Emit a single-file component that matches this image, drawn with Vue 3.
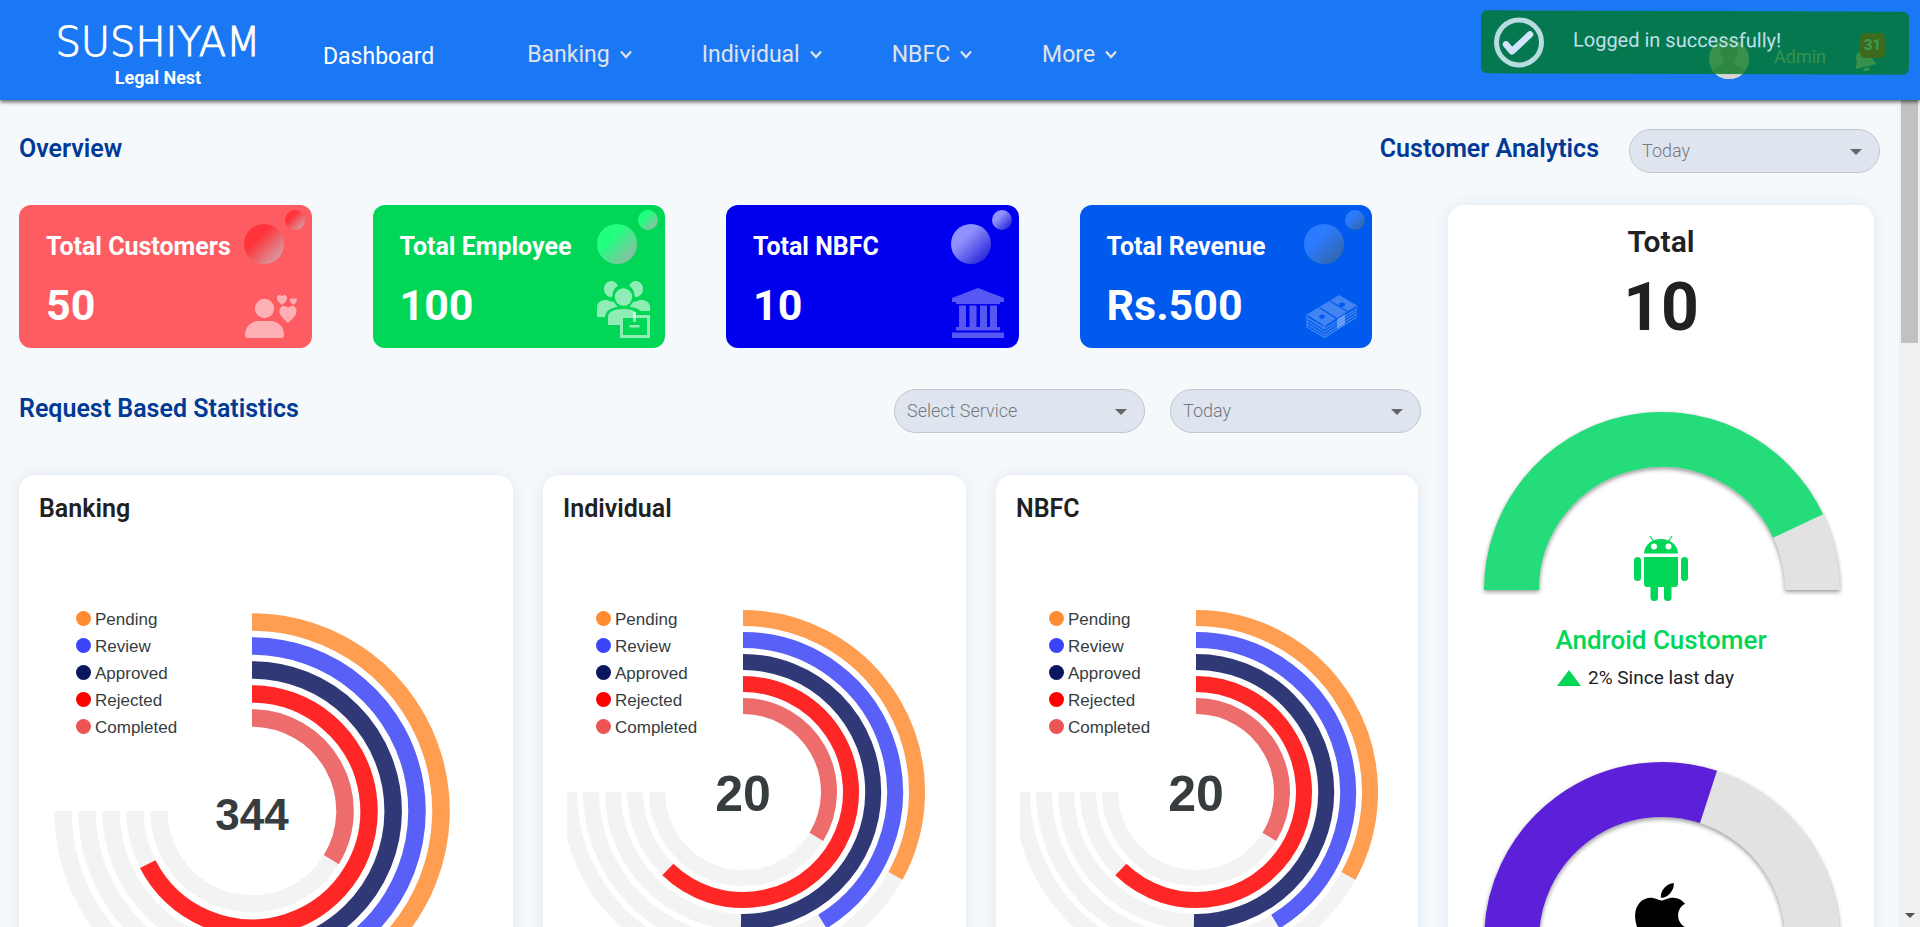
<script setup>
const menus = ['Banking', 'Individual', 'NBFC', 'More']

const stats = [
  { key: 'customers', title: 'Total Customers', value: '50' },
  { key: 'employee', title: 'Total Employee', value: '100' },
  { key: 'nbfc', title: 'Total NBFC', value: '10' },
  { key: 'revenue', title: 'Total Revenue', value: 'Rs.500' },
]

const series = [
  { name: 'Pending', dot: '#ff8c33', bar: '#ff9d50' },
  { name: 'Review', dot: '#3c44f9', bar: '#5860f8' },
  { name: 'Approved', dot: '#0b165e', bar: '#303975' },
  { name: 'Rejected', dot: '#ff0000', bar: '#ff2626' },
  { name: 'Completed', dot: '#ec5353', bar: '#ed6c6c' },
]

const charts = [
  { name: 'Banking', total: 344, size: 'large', width: 494, cx: 233, cy: 288, r: 189, pitch: 24, thick: 17.5, clip: 0, values: [55, 60, 67, 90, 45] },
  { name: 'Individual', total: 20, size: 'small', width: 423, cx: 200, cy: 269, r: 174, pitch: 22, thick: 16, clip: 24, values: [44, 55, 67, 83, 45] },
  { name: 'NBFC', total: 20, size: 'small', width: 422, cx: 200, cy: 269, r: 174, pitch: 22, thick: 16, clip: 24, values: [44, 55, 67, 83, 45] },
]

// Angles are degrees clockwise from twelve o'clock.
function arc(cx, cy, r, from, to) {
  const at = (deg) => {
    const a = ((deg - 90) * Math.PI) / 180
    return `${(cx + r * Math.cos(a)).toFixed(2)} ${(cy + r * Math.sin(a)).toFixed(2)}`
  }
  return `M${at(from)} A${r} ${r} 0 ${to - from > 180 ? 1 : 0} 1 ${at(to)}`
}

const ring = (c, i, percent) => arc(c.cx, c.cy, c.r - i * c.pitch, 0, (270 * percent) / 100)
const gauge = (from, to) => arc(214, 190, 150.5, -90 + 1.8 * from, -90 + 1.8 * to)

const gauges = [
  { key: 'android', title: 'Android Customer', note: '2% Since last day', percent: 86, color: '#25dc7b' },
  { key: 'apple', percent: 60, color: '#5c20d8' },
]
</script>

<template>
  <div class="page">
    <header class="topbar">
      <a class="brand" href="#">
        <span class="brand-name">SUSHIYAM</span>
        <span class="brand-sub">Legal Nest</span>
      </a>
      <nav class="menu">
        <a class="menu-active" href="#">Dashboard</a>
        <button v-for="m in menus" :key="m" type="button">
          {{ m }}
          <svg width="12" height="9" viewBox="0 0 12 9"><path d="M1 1.500 6 7l5-5.500" fill="none" stroke="currentColor" stroke-width="2.200" /></svg>
        </button>
      </nav>
      <div class="user">
        <svg class="avatar" width="40" height="40" viewBox="0 0 40 40">
          <defs><clipPath id="face"><circle cx="20" cy="20" r="20" /></clipPath></defs>
          <g clip-path="url(#face)">
            <rect width="40" height="40" fill="#dcdcdc" />
            <path d="M11 10C11 2 15 0 20 0s9 2 9 10c0 5-2 8-4 11v3c2 3 6 3 8 5l2 2-4 9H9l-4-9 2-2c2-2 6-2 8-5v-3c-2-3-4-6-4-11z" fill="#b3b3b3" />
            <path d="M5 33c9 2 21 2 30 0v8H5z" fill="#d6d6d6" />
          </g>
        </svg>
        <span class="user-name">Admin</span>
        <button class="bell" type="button" aria-label="Notifications">
          <svg width="26" height="26" viewBox="0 0 24 24"><g transform="rotate(-14 12 12)" fill="#dcdcdc"><path d="M12 1.500a1.600 1.600 0 0 0-1.600 1.600v.8C7.200 4.600 5 7.300 5 10.500c0 4-1 5.600-2.600 7.200v1.500h19.200v-1.500C20 16.100 19 14.500 19 10.500c0-3.200-2.200-5.900-5.400-6.600v-.8A1.600 1.600 0 0 0 12 1.500z" /><path d="M9 20.500h6a3 3 0 0 1-6 0z" /></g></svg>
          <span class="badge">31</span>
        </button>
      </div>
    </header>

    <div class="toast" role="status">
      <svg width="52" height="52" viewBox="0 0 52 52"><circle cx="26" cy="26" r="22.500" fill="none" stroke="#b9dce1" stroke-width="5" /><path d="M13 28l6 7L37 18" fill="none" stroke="#d2e4fb" stroke-width="6.500" stroke-linecap="round" stroke-linejoin="round" /></svg>
      <span>Logged in successfully!</span>
    </div>

    <div class="body">
      <main>
        <div class="head">
          <h2>Overview</h2>
          <div class="filters">
            <label class="heading-label" for="analytics-range">Customer Analytics</label>
            <span class="select">
              <select id="analytics-range"><option>Today</option></select>
              <svg width="12" height="6" viewBox="0 0 12 6"><path d="M0 0h12L6 6z" fill="#666" /></svg>
            </span>
          </div>
        </div>

        <div class="columns">
          <div class="left">
            <section class="stats">
              <article v-for="s in stats" :key="s.key" class="stat" :class="s.key">
                <h3>{{ s.title }}</h3>
                <p>{{ s.value }}</p>
                <i class="bubble big"></i>
                <i class="bubble little"></i>

                <svg v-if="s.key === 'customers'" class="stat-icon" width="52" height="43" viewBox="0 0 52 43" fill="#fff" fill-opacity=".52">
                  <circle cx="19.500" cy="13.500" r="9.700" />
                  <path d="M0 40c0-9 7-14 13-14h13c6 0 13 5 13 14 0 2-1 3-2 3H2c-1 0-2-1-2-3z" />
                  <path d="M43 28c-4-4-8.500-7-8.500-12 0-5.500 6-6.500 8.500-3 2.500-3.500 8.500-2.500 8.500 3 0 5-4.500 8-8.500 12z" />
                  <path d="M37 10c-2.500-2.300-5-4.200-5-7 0-3.200 3.500-3.800 5-1.700 1.500-2.100 5-1.500 5 1.700 0 2.800-2.500 4.700-5 7z" />
                  <path d="M48.500 10c-1.800-1.600-3.500-2.900-3.500-4.700 0-2.300 2.500-2.700 3.500-1.200 1-1.500 3.500-1.100 3.500 1.200 0 1.800-1.700 3.100-3.500 4.700z" />
                </svg>

                <svg v-else-if="s.key === 'employee'" class="stat-icon" width="53" height="57" viewBox="0 0 53 57" fill="#fff" fill-opacity=".56">
                  <path d="M14 0c3.500 0 6 2 6.800 5-3.600 2-5.300 5.500-5.300 10l-1.500 1.200C9.500 15.500 7 12 7 8s3-8 7-8z" />
                  <path d="M39 0c-3.500 0-6 2-6.800 5 3.600 2 5.300 5.500 5.300 10l1.500 1.200c4.500-.7 7-4.200 7-8.200s-3-8-7-8z" />
                  <circle cx="26.500" cy="16" r="8.700" />
                  <path d="M0 36V26c0-5 5-7.500 10.500-7 2 1.500 4 2 6 1.500l4 5.500C13 27 8.500 30 8 36z" />
                  <path d="M53 30v-4c0-5-5-7.500-10.500-7-2 1.500-4 2-6 1.500l-4 5.500c6 .5 9 2 11 4z" />
                  <path d="M11 44v-8c0-5 5-8 15.500-8 6 0 10 1 12.500 3.500V34H23v10z" />
                  <path fill-rule="evenodd" d="M23 34h30v23H23zM26 37v17h24V37z" />
                  <path d="M36 31h3v10h-3zM32.500 44h10v2.500h-10z" />
                </svg>

                <svg v-else-if="s.key === 'nbfc'" class="stat-icon" width="52" height="50" viewBox="0 0 52 50" fill="#fff" fill-opacity=".34">
                  <path d="M26 0 52 10v4h-4v2H4v-2H0v-4zM7 17.500h7V39H7zM17.500 17.500h7V39h-7zM28 17.500h7V39h-7zM38 17.500h7V39h-7zM4 39h44v3.500H4zM0 44.500h52V50H0z" />
                </svg>

                <svg v-else class="stat-icon" width="51" height="43" viewBox="0 0 51 43">
                  <g fill="none" stroke="#fff" stroke-opacity=".26" stroke-width="1.200">
                    <path d="M1 19.500v3L18.500 33v-3M1 23l17.500 11L51 13.500M1 26l17.500 11L50 16.500M1 29l17.500 11L50 19.500M1 32l17.500 10.500L50 22.500M51 10.500v12M1 20v12" />
                  </g>
                  <path fill="#fff" fill-opacity=".26" fill-rule="evenodd" d="M33 0 51 10.500 18.500 31 1 19.500zM36 7.500a3 2.200 0 1 0 .1 0zM16 19.500a3 2.200 0 1 0 .1 0zM24.500 5.500l-1.200.8L41 17l1.200-.8zM14 12.300l-1.200.8L30 23.800l1.200-.8z" />
                  <path d="M31 24v10l8-5V19z" fill="#fff" fill-opacity=".3" />
                </svg>
              </article>
            </section>

            <div class="head stats-head">
              <h2>Request Based Statistics</h2>
              <div class="filters">
                <span class="select">
                  <select aria-label="Service"><option>Select Service</option></select>
                  <svg width="12" height="6" viewBox="0 0 12 6"><path d="M0 0h12L6 6z" fill="#666" /></svg>
                </span>
                <span class="select">
                  <select aria-label="Period"><option>Today</option></select>
                  <svg width="12" height="6" viewBox="0 0 12 6"><path d="M0 0h12L6 6z" fill="#666" /></svg>
                </span>
              </div>
            </div>

            <section class="charts">
              <article v-for="c in charts" :key="c.name" class="panel" :class="c.size">
                <h3>{{ c.name }}</h3>
                <div class="chart">
                  <svg :viewBox="`0 0 ${c.width} 500`">
                    <defs>
                      <clipPath :id="`plot-${c.name}`"><rect :x="c.clip" y="0" :width="c.width - c.clip" height="500" /></clipPath>
                    </defs>
                    <g :clip-path="`url(#plot-${c.name})`" fill="none" :stroke-width="c.thick">
                      <template v-for="(s, i) in series" :key="s.name">
                        <path :d="ring(c, i, 100)" stroke="#f3f3f3" />
                        <path :d="ring(c, i, c.values[i])" :stroke="s.bar" />
                      </template>
                    </g>
                    <text class="total" :x="c.cx" :y="c.size === 'large' ? 307 : 288">{{ c.total }}</text>
                  </svg>
                  <ul class="legend">
                    <li v-for="s in series" :key="s.name">
                      <svg width="15" height="15" viewBox="0 0 15 15"><circle cx="7.500" cy="7.500" r="7.500" :fill="s.dot" /></svg>
                      {{ s.name }}
                    </li>
                  </ul>
                </div>
              </article>
            </section>
          </div>

          <aside class="analytics">
            <h3>Total</h3>
            <p class="analytics-total">10</p>
            <section v-for="g in gauges" :key="g.key" class="gauge">
              <svg class="dial" viewBox="0 0 426 210">
                <g class="dial-arc" fill="none" stroke-width="55">
                  <path :d="gauge(0, 100)" stroke="#e2e2e2" />
                  <path :d="gauge(0, g.percent)" :stroke="g.color" />
                </g>
                <g v-if="g.key === 'android'" transform="translate(186 135)" fill="#01d657">
                  <path d="M10 18.500C10 10 18 4 27 4s17 6 17 14.500z" />
                  <path d="M16 1l4 6M38 1l-4 6" stroke="#01d657" stroke-width="1.200" />
                  <circle cx="20" cy="11.500" r="3" fill="#fff" />
                  <circle cx="34.500" cy="11.500" r="3" fill="#fff" />
                  <path d="M10 22h34v27a3 3 0 0 1-3 3H13a3 3 0 0 1-3-3z" />
                  <rect x="0" y="22" width="7" height="24" rx="3.500" />
                  <rect x="47" y="22" width="7" height="24" rx="3.500" />
                  <rect x="16.500" y="44" width="7.500" height="22" rx="3.500" />
                  <rect x="30" y="44" width="7.500" height="22" rx="3.500" />
                </g>
                <path
                  v-else
                  transform="translate(186.5 128.600) scale(.137)"
                  d="M318.700 268.700c-.2-36.700 16.400-64.400 50-84.800-18.800-26.900-47.200-41.700-84.700-44.600-35.500-2.800-74.300 20.700-88.500 20.700-15 0-49.400-19.700-76.400-19.700C63.300 141.200 4 184.800 4 273.500q0 39.300 14.400 81.200c12.800 36.700 59 126.700 107.200 125.200 25.200-.6 43-17.900 75.800-17.900 31.800 0 48.300 17.900 76.400 17.900 48.600-.7 90.400-82.500 102.600-119.300-65.200-30.700-61.700-90-61.700-91.900zm-56.600-164.200c27.300-32.400 24.800-61.900 24-72.500-24.100 1.400-52 16.400-67.900 34.900-17.500 19.800-27.800 44.300-25.600 71.900 26.100 2 49.900-11.400 69.500-34.300z"
                />
              </svg>
              <h4 v-if="g.title">{{ g.title }}</h4>
              <p v-if="g.note">
                <svg width="24" height="16" viewBox="0 0 24 16"><path d="M12 0 24 16H0z" fill="#01d657" /></svg>
                {{ g.note }}
              </p>
            </section>
          </aside>
        </div>
      </main>

      <div class="scrollbar">
        <div class="thumb"></div>
        <svg width="10" height="5" viewBox="0 0 10 5"><path d="M0 0h10L5 5z" fill="#505050" /></svg>
      </div>
    </div>
  </div>
</template>

<style>
body {
  background: #f5f9fc;
}
</style>

<style scoped>
.page {
  display: flex;
  flex-direction: column;
  height: 100vh;
  overflow: hidden;
  position: relative;
  font-family: Roboto, "Liberation Sans", sans-serif;
  color: #212121;
}
.page * {
  box-sizing: border-box;
}
h2, h3, h4, p, ul {
  margin: 0;
  padding: 0;
}
a {
  color: inherit;
  text-decoration: none;
}
button {
  border: 0;
  padding: 0;
  background: none;
  color: inherit;
  font: inherit;
}

.topbar {
  flex: none;
  display: flex;
  align-items: center;
  height: 100px;
  padding: 0 35px 0 52px;
  background: #1a78f4;
  color: #fff;
  box-shadow: 0 2px 4px rgba(0, 0, 0, .6);
  position: relative;
  z-index: 1;
}
.brand {
  display: flex;
  flex-direction: column;
  align-items: center;
  width: 212px;
  padding-top: 10px;
}
.brand-name {
  font: 200 40px/46px "DejaVu Sans", sans-serif;
  -webkit-text-stroke: 1px currentColor;
}
.brand-sub {
  font-size: 18px;
  font-weight: 700;
  line-height: 26px;
}
.menu {
  display: flex;
  align-items: center;
  gap: 70px;
  margin-left: 59px;
  font-size: 23px;
  line-height: 28px;
  padding-top: 9px;
}
.menu-active {
  margin-right: 23px;
  padding-top: 4px;
}
.menu button {
  display: flex;
  align-items: center;
  gap: 10px;
  color: #e0e3ea;
}
.user {
  display: flex;
  align-items: center;
  margin-left: auto;
  padding-top: 18px;
  color: #dcdcdc;
}
.user-name {
  font-size: 18px;
  margin-left: 25px;
  padding-bottom: 5px;
}
.bell {
  position: relative;
  width: 34px;
  height: 26px;
  margin-left: 25px;
  text-align: left;
}
.badge {
  position: absolute;
  top: -13px;
  right: 0;
  width: 25px;
  border-radius: 5px;
  background: #f4432e;
  color: #fff;
  font-size: 15px;
  font-weight: 700;
  line-height: 25px;
  text-align: center;
}
.toast {
  position: absolute;
  z-index: 2;
  top: 11px;
  right: 11px;
  display: flex;
  align-items: center;
  gap: 28px;
  width: 428px;
  height: 63px;
  padding: 0 12px;
  border-radius: 6px;
  background: rgba(0, 120, 25, .75);
  color: #bfe0ea;
  font-size: 20px;
  transform: rotate(.2deg);
}
.toast span {
  padding-bottom: 6px;
}

.body {
  flex: 1;
  display: flex;
  min-height: 0;
}
main {
  flex: 1;
  min-width: 0;
  overflow: hidden;
  padding: 29px 19px 0;
}
.scrollbar {
  display: flex;
  flex-direction: column;
  justify-content: space-between;
  align-items: center;
  width: 21px;
  padding-bottom: 9px;
  background: #f0f0f0;
}
.thumb {
  width: 17px;
  height: 243px;
  background: #c1c1c1;
}
.head {
  display: flex;
  align-items: center;
  justify-content: space-between;
  margin-bottom: 32px;
}
.head h2,
.heading-label {
  padding-bottom: 5px;
  color: #003a94;
  font-size: 25px;
  font-weight: 600;
  line-height: 28px;
}
.filters {
  display: flex;
  align-items: center;
  gap: 25px;
}
.heading-label {
  margin-right: 5px;
}
.select {
  position: relative;
}
.select select {
  display: block;
  width: 251px;
  height: 44px;
  padding: 0 40px 2px 12px;
  border: 1px solid #c2c7cf;
  border-radius: 22px;
  background: #dee5ef;
  color: #74787f;
  font: 300 18px Roboto, "Liberation Sans", sans-serif;
  appearance: none;
}
.select svg {
  position: absolute;
  top: 20px;
  right: 18px;
  pointer-events: none;
}

.columns {
  display: grid;
  grid-template-columns: 1402fr 426fr;
  gap: 27px;
  padding-right: 6px;
}
.stats {
  display: grid;
  grid-template-columns: repeat(4, 1fr);
  gap: 61px;
  padding-right: 49px;
}
.stat {
  position: relative;
  padding: 27px 0 17px 27px;
  border-radius: 12px;
  color: #fff;
  --from: #ff3339;
  --to: #d3a3a8;
}
.stat h3 {
  font-size: 25px;
  font-weight: 700;
  line-height: 30px;
  margin-bottom: 17px;
}
.stat p {
  font-size: 43px;
  font-weight: 700;
  line-height: 52px;
}
.customers {
  background: #fc5c62;
}
.employee {
  background: #01d657;
  --from: #20ff80;
  --to: #96b8a6;
}
.nbfc {
  background: #0000ee;
  --from: #9090ff;
  --to: #2222d6;
}
.revenue {
  background: #005aee;
  --from: #2b7bff;
  --to: #3366aa;
}
.bubble {
  position: absolute;
  border-radius: 50%;
  background: linear-gradient(135deg, var(--from) 35%, var(--to) 90%);
}
.big {
  top: 19px;
  right: 28px;
  width: 40px;
  height: 40px;
}
.little {
  top: 5px;
  right: 7px;
  width: 20px;
  height: 20px;
}
.stat-icon {
  position: absolute;
  right: 15px;
  bottom: 10px;
}

.stats-head {
  margin: 41px 0 42px;
}
.charts {
  display: grid;
  grid-template-columns: 494fr 423fr 422fr;
  gap: 30px;
  padding-right: 3px;
}
.panel,
.analytics {
  border-radius: 16px;
  background: #fff;
  box-shadow: 0 0 16px rgba(60, 80, 110, .1);
}
.panel {
  padding-top: 20px;
}
.panel h3 {
  padding-left: 20px;
  font-size: 25px;
  font-weight: 600;
  line-height: 28px;
}
.chart {
  display: grid;
}
.chart > * {
  grid-area: 1 / 1;
}
.total {
  font: 700 50px "Liberation Sans", Arial, sans-serif;
  fill: #373d3f;
  text-anchor: middle;
}
.large .total {
  font-size: 44px;
}
.legend {
  align-self: start;
  padding: 83px 0 0 53px;
  list-style: none;
  font: 17px/27px "Liberation Sans", Arial, sans-serif;
  color: #373d3f;
}
.large .legend {
  padding-left: 57px;
}
.legend li {
  display: flex;
  align-items: center;
  gap: 4px;
}
.legend svg {
  margin-bottom: 2px;
}

.analytics {
  padding-top: 19px;
  text-align: center;
}
.analytics h3 {
  font-size: 30px;
  font-weight: 600;
  line-height: 36px;
}
.analytics-total {
  margin-bottom: 52px;
  font-size: 66px;
  font-weight: 700;
  line-height: 80px;
  padding-top: 8px;
}
.gauge {
  height: 350px;
}
.dial {
  display: block;
  width: 100%;
}
.dial-arc {
  filter: drop-shadow(0 2px 2px rgba(0, 0, 0, .4));
}
.gauge h4 {
  padding-top: 13px;
  font-size: 26px;
  font-weight: 500;
  line-height: 34px;
  color: #01d657;
}
.gauge p {
  display: flex;
  align-items: center;
  gap: 7px;
  padding: 9px 0 0 109px;
  font-size: 19px;
  line-height: 24px;
}
</style>
